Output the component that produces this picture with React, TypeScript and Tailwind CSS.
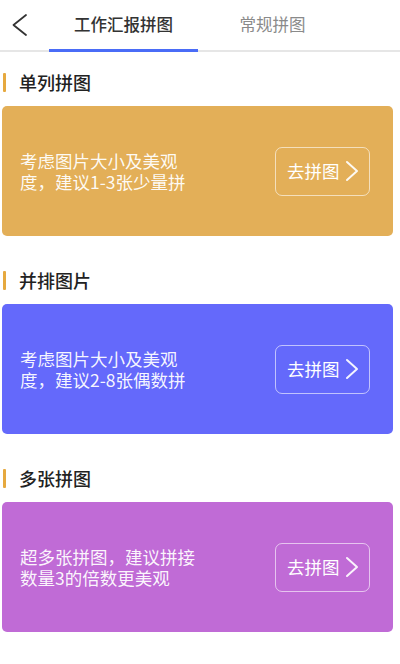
import React from "react";

const cards = [
  {
    title: "单列拼图",
    bg: "bg-[#E3AF58]",
    lines: ["考虑图片大小及美观", "度，建议1-3张少量拼"],
  },
  {
    title: "并排图片",
    bg: "bg-[#6469FB]",
    lines: ["考虑图片大小及美观", "度，建议2-8张偶数拼"],
  },
  {
    title: "多张拼图",
    bg: "bg-[#C06BD6]",
    lines: ["超多张拼图，建议拼接", "数量3的倍数更美观"],
  },
];

export default function App() {
  return (
    <div
      className="w-[400px] h-[664px] bg-white overflow-hidden"
      style={{ fontFamily: '"Noto Sans CJK SC", "Noto Sans", sans-serif' }}
    >
      <div className="flex h-[52px] shadow-[inset_0_-2px_0_#e6e6e6]">
        <div className="w-[49px] flex items-center pb-[3px]">
          <svg width="40" height="49" viewBox="0 0 40 49" className="block">
            <path
              d="M26 15 L13.5 25 L26 35"
              fill="none"
              stroke="#333"
              strokeWidth="1.8"
              strokeLinecap="round"
              strokeLinejoin="round"
            />
          </svg>
        </div>
        <div className="w-[149px] flex items-center justify-center border-b-[3px] border-[#4A6CF7] text-[16.5px] text-[#333] font-medium">
          工作汇报拼图
        </div>
        <div className="w-[149px] flex items-center justify-center border-b-[3px] border-transparent text-[16.5px] text-[#8a8a8a]">
          常规拼图
        </div>
      </div>

      <div className="pt-[6px] flex flex-col gap-[20px]">
        {cards.map((c) => (
          <div key={c.title}>
            <div className="flex items-center h-[48px]">
              <div className="ml-[3px] w-[3px] h-[19px] bg-[#E6A93F] rounded-[1px]" />
              <div className="ml-[13px] text-[18px] font-medium text-[#222]">{c.title}</div>
            </div>
            <div
              className={`ml-[2px] w-[391px] h-[130px] rounded-[5px] ${c.bg} flex items-center justify-between pl-[18px] pr-[23px]`}
            >
              <div className="text-[17.5px] leading-[21px] text-white/95">
                {c.lines[0]}
                <br />
                {c.lines[1]}
              </div>
              <div className="w-[95px] h-[49px] rounded-[7px] border border-white/60 flex items-center pl-[11px]">
                <span className="text-[17.5px] text-white">去拼图</span>
                <svg width="18" height="24" viewBox="0 0 18 24" className="ml-[3px] block">
                  <path
                    d="M4 3 L14 12 L4 21"
                    fill="none"
                    stroke="rgba(255,255,255,0.92)"
                    strokeWidth="2"
                    strokeLinecap="round"
                    strokeLinejoin="round"
                  />
                </svg>
              </div>
            </div>
          </div>
        ))}
      </div>
    </div>
  );
}
